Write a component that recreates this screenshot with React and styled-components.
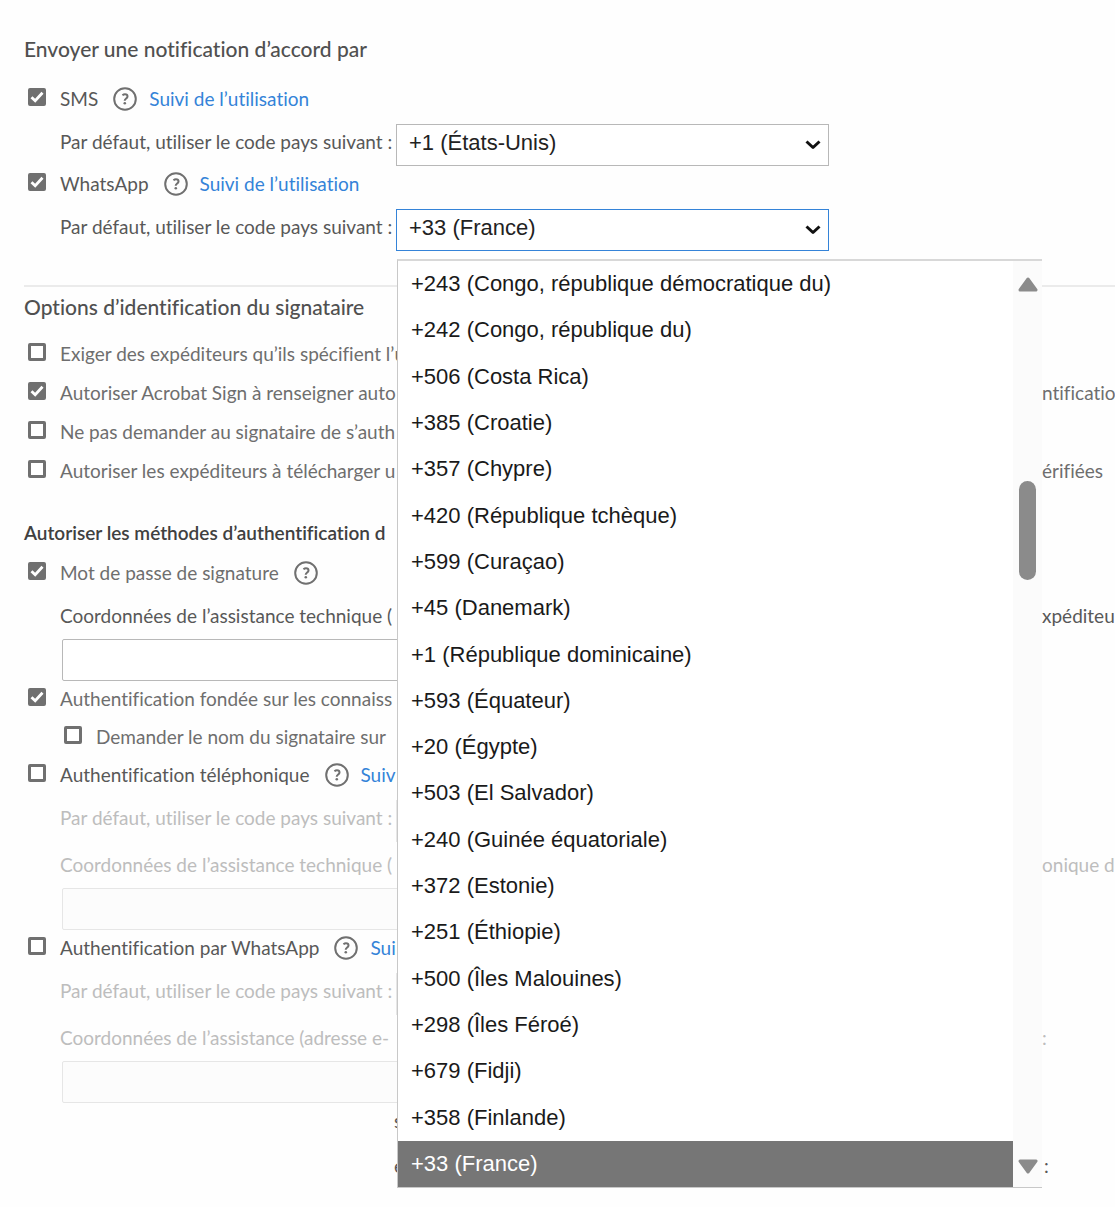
import React from 'react'
import styled, { createGlobalStyle, ThemeProvider } from 'styled-components'

const theme = {
    heading: '#505050',
    strong: '#404040',
    label: '#585858',
    muted: '#6e6e6e',
    disabled: '#bdbdbd',
    link: '#3483d8',
    border: '#b8b8b8',
    lightBorder: '#e6e6e6',
    selected: '#767676',
}

const GlobalStyle = createGlobalStyle`
*{
    box-sizing:border-box;
}
body{
    margin:0;
    background-color:#fefefe;
    overflow-x:hidden;
    font-family:Lato, 'Liberation Sans', sans-serif;
    font-variant-ligatures:none;
}
`
const Page = styled.main`
padding:34px 0 20px 24px;
overflow:hidden;
font-size:19px;
line-height:36px;
color:${props => props.theme.label};
`
const Section = styled.section`
display:flex;
flex-direction:column;
`
const DividedSection = styled(Section)`
margin-top:34px;
padding-top:5px;
border-top:2px solid #ebebeb;
`
const Title = styled.h2`
margin:0;
margin-bottom:${props => props.$tight ? '14px' : '17px'};
font-size:21px;
font-weight:500;
line-height:30px;
color:${props => props.theme.heading};
`
const Subtitle = styled.h3`
margin:27px 0 7px;
font-size:19px;
font-weight:600;
line-height:30px;
white-space:nowrap;
color:${props => props.theme.strong};
`
const Options = styled.div`
display:flex;
flex-direction:column;
gap:1px;
`
const Line = styled.div`
display:flex;
align-items:flex-start;
height:38px;
padding-left:${props => props.$nested ? '40px' : '4px'};
white-space:nowrap;
color:${props => props.$muted ? props.theme.muted : props.theme.label};
`
const Box = styled.span`
position:relative;
flex:none;
display:flex;
width:18px;
height:18px;
margin:7px 14px 0 0;
`
const BoxInput = styled.input`
appearance:none;
width:18px;
height:18px;
margin:0;
border:3px solid #707070;
border-radius:2px;
background-color:#fff;
&:checked{
    background-color:#707070;
}
`
const BoxMark = styled.svg`
position:absolute;
left:0;
top:0;
pointer-events:none;
`
const Head = styled.span`
display:inline-block;
width:${props => props.$wide ? '982px' : 'auto'};
`
const HelpButton = styled.button`
flex:none;
display:flex;
margin:6px 12px 0 15px;
padding:0;
border:none;
background:none;
color:#707070;
cursor:pointer;
`
const Link = styled.a`
color:${props => props.theme.link};
text-decoration:none;
`
const Field = styled.div`
display:flex;
align-items:flex-start;
margin-top:5px;
padding-left:36px;
color:${props => props.$off ? props.theme.disabled : props.theme.label};
`
const FieldLabel = styled.label`
flex:none;
width:336px;
white-space:nowrap;
`
const SelectWrap = styled.div`
position:relative;
flex:none;
width:433px;
`
const StyledSelect = styled.select`
appearance:none;
display:block;
width:100%;
height:42px;
padding:0 40px 5px 12px;
border:1px solid ${props => props.$open ? props.theme.link : props.theme.border};
border-radius:0;
outline:none;
background-color:#fff;
font-family:'Liberation Sans', Arial, sans-serif;
font-size:22px;
color:#222;
opacity:1;
&:disabled{
    border-color:${props => props.theme.lightBorder};
}
`
const Arrow = styled.svg`
position:absolute;
right:8px;
top:15px;
pointer-events:none;
`
const TextBlock = styled.div`
display:flex;
flex-direction:column;
gap:5px;
margin-top:5px;
padding-left:36px;
white-space:nowrap;
color:${props => props.$off ? props.theme.disabled : props.theme.label};
`
const TextInput = styled.input`
width:620px;
height:42px;
margin-left:2px;
padding:0 10px;
border:1px solid ${props => props.theme.border};
border-radius:2px;
background-color:#fff;
font-size:19px;
&:disabled{
    border-color:${props => props.theme.lightBorder};
    background-color:#fcfcfc;
}
`
const Rest = styled.div`
display:flex;
height:45px;
padding-left:370px;
white-space:nowrap;
`
const RestHead = styled.span`
width:650px;
`
const Menu = styled.div`
position:absolute;
z-index:1;
left:1px;
top:50px;
display:flex;
width:645px;
height:929px;
border:1px solid #c8c8c8;
border-width:2px 0 1px 1px;
border-top-color:#d8d8d8;
background-color:#fff;
font-family:'Liberation Sans', Arial, sans-serif;
font-size:22px;
color:#1a1a1a;
`
const List = styled.ul`
flex:1;
display:grid;
grid-auto-rows:1fr;
margin:0;
padding:0;
list-style:none;
`
const Item = styled.li`
display:flex;
align-items:center;
padding-left:13px;
white-space:nowrap;
background-color:${props => props.$selected ? props.theme.selected : 'transparent'};
color:${props => props.$selected ? '#fff' : 'inherit'};
`
const Scroll = styled.div`
display:flex;
flex-direction:column;
align-items:center;
width:29px;
padding:15px 0 12px;
background-color:#fbfbfb;
`
const Thumb = styled.div`
width:17px;
height:99px;
margin:189px 0 auto;
border-radius:9px;
background-color:#8b8b8b;
`

const countries = [
    '+243 (Congo, république démocratique du)',
    '+242 (Congo, république du)',
    '+506 (Costa Rica)',
    '+385 (Croatie)',
    '+357 (Chypre)',
    '+420 (République tchèque)',
    '+599 (Curaçao)',
    '+45 (Danemark)',
    '+1 (République dominicaine)',
    '+593 (Équateur)',
    '+20 (Égypte)',
    '+503 (El Salvador)',
    '+240 (Guinée équatoriale)',
    '+372 (Estonie)',
    '+251 (Éthiopie)',
    '+500 (Îles Malouines)',
    '+298 (Îles Féroé)',
    '+679 (Fidji)',
    '+358 (Finlande)',
    '+33 (France)',
]

const Help = () => {
    return <HelpButton type='button' aria-label='Aide'>
        <svg width='24' height='24' viewBox='0 0 24 24' fill='none' stroke='currentColor' strokeWidth='2'>
            <circle cx='12' cy='12' r='10.8' />
            <path d='M9.4 8.3c.9-.7 1.700-1 2.600-1 1.500 0 2.500.8 2.500 2.100 0 1.900-2.800 2.200-2.800 4.400' />
            <circle cx='11.800' cy='16.300' r='1.300' fill='currentColor' stroke='none' />
        </svg>
    </HelpButton>
}

const Check = ({ id, text, tail, checked, nested, muted, help, link }) => {
    return <Line $nested={nested} $muted={muted}>
        <Box>
            <BoxInput type='checkbox' id={id} defaultChecked={checked} />
            {checked && <BoxMark width='18' height='18' viewBox='0 0 18 18' fill='none' stroke='#fff' strokeWidth='2.8'>
                <path d='M3.5 9.2l3.700 3.600 7.300-8' />
            </BoxMark>}
        </Box>
        <label htmlFor={id}><Head $wide={Boolean(tail)}>{text}</Head>{tail}</label>
        {help && <Help />}
        {link && <Link href='#suivi'>{link}</Link>}
    </Line>
}

const CountryField = ({ id, value, off, open, children }) => {
    return <Field $off={off}>
        <FieldLabel htmlFor={id}>Par défaut, utiliser le code pays suivant :</FieldLabel>
        <SelectWrap>
            <StyledSelect id={id} disabled={off} $open={open} defaultValue={value}>
                <option value={value}>{value}</option>
            </StyledSelect>
            {!off && <Arrow width='16' height='12' viewBox='0 0 16 12' fill='none' stroke='#111' strokeWidth='3'>
                <path d='M1.5 2.5L8 8.5l6.5-6' strokeLinejoin='round' />
            </Arrow>}
            {children}
        </SelectWrap>
    </Field>
}

const SupportField = ({ id, text, tail, off }) => {
    return <TextBlock $off={off}>
        <label htmlFor={id}><Head $wide>{text}</Head>{tail}</label>
        <TextInput type='text' id={id} disabled={off} />
    </TextBlock>
}

const CountryMenu = () => {
    return <Menu>
        <List role='listbox' aria-label='Code pays'>
            {countries.map(name => {
                const selected = name === '+33 (France)'
                return <Item key={name} role='option' aria-selected={selected} $selected={selected}>{name}</Item>
            })}
        </List>
        <Scroll>
            <svg width='20' height='16' viewBox='0 0 20 16'>
                <path d='M10 3L18 14H2z' fill='#8b8b8b' stroke='#8b8b8b' strokeWidth='3' strokeLinejoin='round' />
            </svg>
            <Thumb />
            <svg width='20' height='16' viewBox='0 0 20 16'>
                <path d='M10 13L18 2H2z' fill='#8b8b8b' stroke='#8b8b8b' strokeWidth='3' strokeLinejoin='round' />
            </svg>
        </Scroll>
    </Menu>
}

const App = () => {
    return <ThemeProvider theme={theme}>
        <GlobalStyle />
        <Page>
            <Section>
                <Title>Envoyer une notification d’accord par</Title>
                <Check id='sms' text='SMS' checked help link='Suivi de l’utilisation' />
                <CountryField id='smsCountry' value='+1 (États-Unis)' />
                <Check id='whatsapp' text='WhatsApp' checked help link='Suivi de l’utilisation' />
                <CountryField id='whatsappCountry' value='+33 (France)' open>
                    <CountryMenu />
                </CountryField>
            </Section>
            <DividedSection>
                <Title $tight>Options d’identification du signataire</Title>
                <Options>
                    <Check id='require' text='Exiger des expéditeurs qu’ils spécifient l’u' muted />
                    <Check id='autofill' text='Autoriser Acrobat Sign à renseigner auto' tail='ntificatio' checked muted />
                    <Check id='skip' text='Ne pas demander au signataire de s’auth' muted />
                    <Check id='download' text='Autoriser les expéditeurs à télécharger u' tail='érifiées' muted />
                </Options>
                <Subtitle>Autoriser les méthodes d’authentification d</Subtitle>
                <Check id='password' text='Mot de passe de signature' checked muted help />
                <SupportField id='passwordSupport' text='Coordonnées de l’assistance technique (' tail='xpéditeu' />
                <Check id='kba' text='Authentification fondée sur les connaiss' checked muted />
                <Check id='kbaName' text='Demander le nom du signataire sur' nested muted />
                <Check id='phone' text='Authentification téléphonique' help link='Suiv' />
                <CountryField id='phoneCountry' value='' off />
                <SupportField id='phoneSupport' text='Coordonnées de l’assistance technique (' tail='onique d' off />
                <Check id='waAuth' text='Authentification par WhatsApp' help link='Sui' />
                <CountryField id='waCountry' value='' off />
                <SupportField id='waSupport' text='Coordonnées de l’assistance (adresse e-' tail=':' off />
                <Rest>s</Rest>
                <Rest><RestHead>e</RestHead><span>:</span></Rest>
            </DividedSection>
        </Page>
    </ThemeProvider>
}

export default App
